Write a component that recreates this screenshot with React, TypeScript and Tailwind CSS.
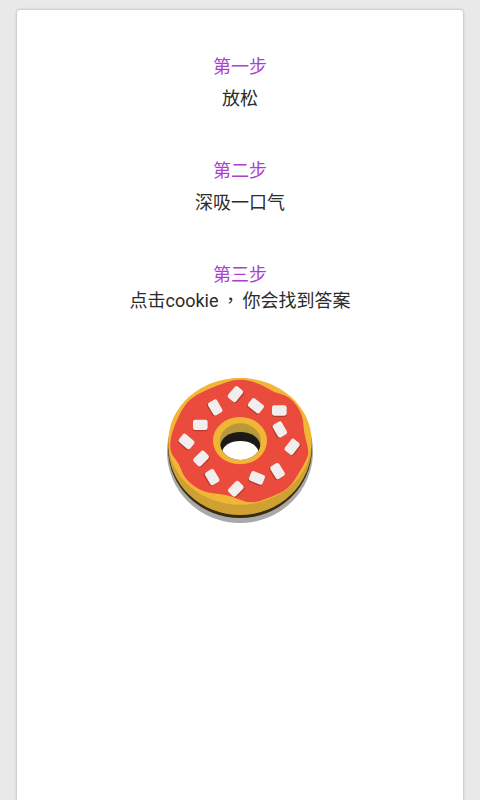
const sprinkles = [
  [256, 87, -50],
  [196, 127, 60],
  [318, 122, 38],
  [388, 136, 0],
  [151, 179, 0],
  [390, 193, 60],
  [110, 229, 40],
  [426, 245, -52],
  [153, 280, -45],
  [383, 318, 58],
  [187, 336, 60],
  [321, 338, 22],
  [257, 371, -45],
];

// edge of the icing, smoothed through the midpoints below
const icing = [
  [264, 40], [330, 55], [369, 81], [420, 94], [458, 147], [461, 201], [476, 255], [473, 278],
  [446, 326], [416, 371], [360, 398], [300, 418], [231, 388], [159, 383], [103, 341], [88, 296],
  [58, 261], [64, 201], [103, 118], [141, 88], [195, 64],
];

function icingPath() {
  const mid = (a: number[], b: number[]) => `${(a[0] + b[0]) / 2} ${(a[1] + b[1]) / 2}`;
  let d = `M${mid(icing[icing.length - 1], icing[0])}`;
  icing.forEach((p, i) => {
    d += `Q${p[0]} ${p[1]} ${mid(p, icing[(i + 1) % icing.length])}`;
  });
  return d + "Z";
}

function Donut() {
  return (
    <svg viewBox="0 0 540 510" className="block mx-auto w-[180px] h-[170px]">
      <defs>
        <clipPath id="hole">
          <ellipse cx="271" cy="230" rx="62" ry="55" />
        </clipPath>
      </defs>
      <ellipse cx="270" cy="260" rx="219" ry="214" fill="#a9a9a9" />
      <ellipse cx="270" cy="250" rx="216" ry="209" fill="#3a2a12" />
      <ellipse cx="270" cy="245" rx="215" ry="205" fill="#cfa032" />
      <ellipse cx="270" cy="229" rx="215" ry="190" fill="#f2b636" />
      <path d={icingPath()} fill="#ea4b3c" />
      <ellipse cx="270" cy="227" rx="81" ry="71" fill="#f2b636" />
      <g clipPath="url(#hole)">
        <rect x="200" y="170" width="140" height="120" fill="#b8993a" />
        <ellipse cx="271" cy="243" rx="60" ry="42" fill="#1d1a16" />
        <ellipse cx="271" cy="262" rx="54" ry="34" fill="#ffffff" />
      </g>
      {sprinkles.map(([x, y, r]) => (
        <g key={`${x}-${y}`} transform={`rotate(${r} ${x} ${y})`}>
          <rect x={x - 22} y={y - 11} width="44" height="31" rx="7" fill="#b53a2e" />
          <rect x={x - 22} y={y - 15} width="44" height="31" rx="7" fill="#f3eeee" />
        </g>
      ))}
    </svg>
  );
}

export default function App() {
  return (
    <div className="h-screen overflow-hidden bg-[#e9e9e9] px-[17px] pt-[10px]" style={{ fontFamily: "Roboto, 'Noto Sans CJK SC', sans-serif" }}>
      <div className="h-full rounded-t-[3px] bg-white pt-[41px] text-center text-lg shadow-[0_0_3px_rgba(0,0,0,0.3)]">
        {/* steps */}
        <p className="leading-8 text-[#ab3fd0]">第一步</p>
        <p className="leading-8 text-[#2b2b2b]">放松</p>
        <p className="mt-10 leading-8 text-[#ab3fd0]">第二步</p>
        <p className="leading-8 text-[#2b2b2b]">深吸一口气</p>
        <p className="mt-10 leading-8 text-[#ab3fd0]">第三步</p>
        <p className="h-5 -translate-y-[2px] leading-5 text-[#2b2b2b]">
          点击cookie
          <span className="px-[3px] font-['Noto_Sans_CJK_TC']">，</span>
          你会找到答案
        </p>
        <div className="mt-[54px]">
          <Donut />
        </div>
      </div>
    </div>
  );
}
